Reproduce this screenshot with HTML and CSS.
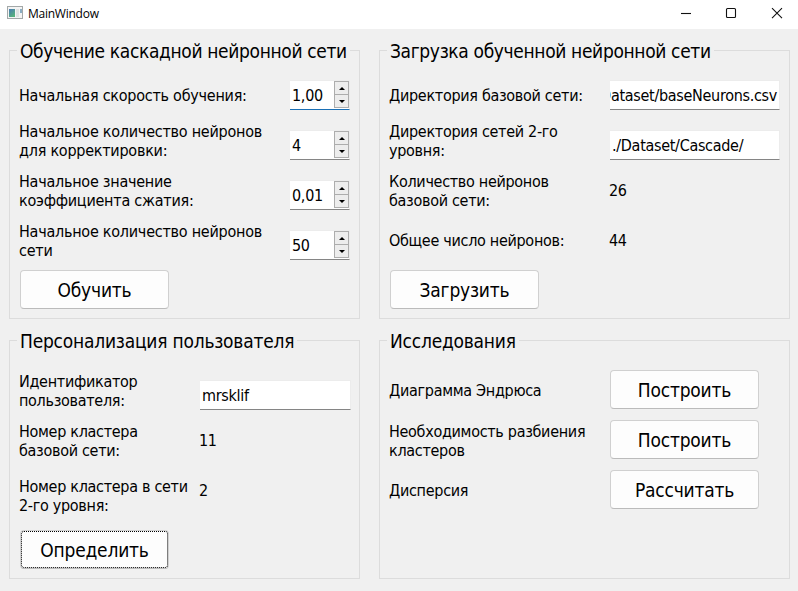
FILE: index.html
```html
<!DOCTYPE html>
<html lang="ru">
<head>
<meta charset="utf-8">
<title>MainWindow</title>
<link rel="stylesheet" href="styles.css">
</head>
<body>
<header class="titlebar">
  <svg class="app-icon" width="16" height="14" viewBox="0 0 16 14">
    <defs><linearGradient id="g" x1="0" y1="0" x2="0.6" y2="1"><stop offset="0" stop-color="#4a7ab5"/><stop offset="1" stop-color="#57b27c"/></linearGradient></defs>
    <rect x="0.5" y="0.5" width="15" height="12" fill="#f4f4f4" stroke="#a3a8a8"/>
    <rect x="2" y="3" width="6" height="8" fill="url(#g)"/>
    <rect x="9" y="3" width="3" height="8" fill="#dfe2e2"/>
    <rect x="13" y="3" width="2" height="4" fill="#8aaec4"/>
  </svg>
  <span class="caption">MainWindow</span>
  <svg class="controls" width="104" height="12" viewBox="0 0 104 12" fill="none" stroke="#111" stroke-width="1.1">
    <path d="M1 6.5H11"/>
    <rect x="46.5" y="1.5" width="9" height="9" rx="1"/>
    <path d="M92 1.2L102 11.2M102 1.2L92 11.2"/>
  </svg>
</header>
<main class="panels">
  <section class="group train">
    <h2>Обучение каскадной нейронной сети</h2>
    <div class="form">
      <label class="low">Начальная скорость обучения:</label>
      <div class="field spin active"><span>1,00</span><i class="steps"><b class="up"></b><b class="down"></b></i></div>
      <label>Начальное количество нейронов<br>для корректировки:</label>
      <div class="field spin"><span>4</span><i class="steps"><b class="up"></b><b class="down"></b></i></div>
      <label>Начальное значение<br>коэффициента сжатия:</label>
      <div class="field spin"><span>0,01</span><i class="steps"><b class="up"></b><b class="down"></b></i></div>
      <label>Начальное количество нейронов<br>сети</label>
      <div class="field spin"><span>50</span><i class="steps"><b class="up"></b><b class="down"></b></i></div>
      <button>Обучить</button>
    </div>
  </section>
  <section class="group load">
    <h2>Загрузка обученной нейронной сети</h2>
    <div class="form">
      <label class="low">Директория базовой сети:</label>
      <div class="field scrolled"><span>Dataset/baseNeurons.csv</span></div>
      <label>Директория сетей 2-го<br>уровня:</label>
      <div class="field"><span>./Dataset/Cascade/</span></div>
      <label>Количество нейронов<br>базовой сети:</label>
      <output>26</output>
      <label>Общее число нейронов:</label>
      <output>44</output>
      <button>Загрузить</button>
    </div>
  </section>
  <section class="group person">
    <h2>Персонализация пользователя</h2>
    <div class="form">
      <label>Идентификатор<br>пользователя:</label>
      <div class="field"><span>mrsklif</span></div>
      <label>Номер кластера<br>базовой сети:</label>
      <output>11</output>
      <label class="shifted">Номер кластера в сети<br>2-го уровня:</label>
      <output>2</output>
      <button class="focused">Определить</button>
    </div>
  </section>
  <section class="group study">
    <h2>Исследования</h2>
    <div class="form">
      <label>Диаграмма Эндрюса</label><button>Построить</button>
      <label>Необходимость разбиения<br>кластеров</label><button>Построить</button>
      <label>Дисперсия</label><button>Рассчитать</button>
    </div>
  </section>
</main>
</body>
</html>
```
FILE: styles.css
```css
* { box-sizing: border-box; }
body {
  margin: 0;
  height: 591px;
  overflow: hidden;
  background: #f0f0f0;
  color: #000;
  font: 16px/19px "DejaVu Sans Condensed", "DejaVu Sans", sans-serif;
  font-stretch: condensed;
  letter-spacing: -0.3px;
}
.titlebar {
  height: 29px;
  background: #fff;
  display: flex;
  align-items: center;
  padding: 0 14px 3px 7px;
}
.caption {
  font: 12px/16px "Open Sans", sans-serif;
  letter-spacing: -0.25px;
  margin-left: 5px;
  flex: 1;
  padding-top: 2px;
}
.panels {
  display: grid;
  grid-template-columns: 351px 411px;
  grid-template-rows: 269px 239px;
  gap: 21px 19px;
  padding: 21px 8px 0 9px;
}
.group { border: 1px solid #dcdcdc; }
.group h2 {
  width: max-content;
  margin: -12px 0 0 7px;
  padding: 0 3px;
  background: #f0f0f0;
  font-size: 19px;
  font-weight: normal;
  line-height: 24px;
  letter-spacing: -0.22px;
  white-space: nowrap;
}
.train h2, .load h2 { letter-spacing: -0.35px; }
.form {
  display: grid;
  grid-auto-rows: 40px;
  row-gap: 10px;
  padding: 7px 0 0 9px;
  align-items: center;
}
.train .form { grid-template-columns: 270px 61px; }
.load .form { grid-template-columns: 220px 171px; }
.person .form { grid-template-columns: 180px 152px; padding-top: 17px; }
.study .form { grid-template-columns: 221px 149px; padding-top: 17px; }
label, output { white-space: nowrap; }
label { padding-top: 1px; }
.train label { letter-spacing: -0.25px; }
.low { align-self: end; line-height: 29px; }
.shifted { padding-top: 11px; }
.field {
  align-self: end;
  height: 30px;
  display: flex;
  align-items: center;
  margin-left: 1px;
  padding: 0 2px;
  background: #fff;
  border: 1px solid #ececec;
  border-width: 1px 1px 1px 0;
  border-bottom-color: #858585;
  overflow: hidden;
  white-space: nowrap;
}
.field span { padding-top: 1px; }
.scrolled { justify-content: flex-end; }
.spin { justify-content: space-between; align-items: start; padding-right: 0; }
.spin span { line-height: 27px; }
.active { border-bottom-color: #1a6fb5; }
.steps {
  width: 15px;
  height: 27px;
  display: grid;
  grid-template-rows: 12px 12px;
  gap: 1px;
  background: #adadad;
  border: 1px solid #adadad;
}
.steps b { background: #ededed; display: grid; place-items: center; }
.steps b::after { content: ""; border: 3px solid transparent; }
.steps .up::after { border-top: 0; border-bottom-color: #000; }
.steps .down::after { border-bottom: 0; border-top-color: #000; }
button {
  width: 149px;
  height: 39px;
  margin: 0 0 1px 1px;
  padding: 2px 0 0;
  border: 1px solid #d0d0d0;
  border-bottom-color: #bbb;
  border-radius: 4px;
  background: #fdfdfd;
  color: #000;
  font: inherit;
  font-size: 19px;
  letter-spacing: -0.2px;
}
.study button { margin-left: 0; }
.focused { margin-top: 20px; outline: 1px dotted #000; outline-offset: -2px; }
```
